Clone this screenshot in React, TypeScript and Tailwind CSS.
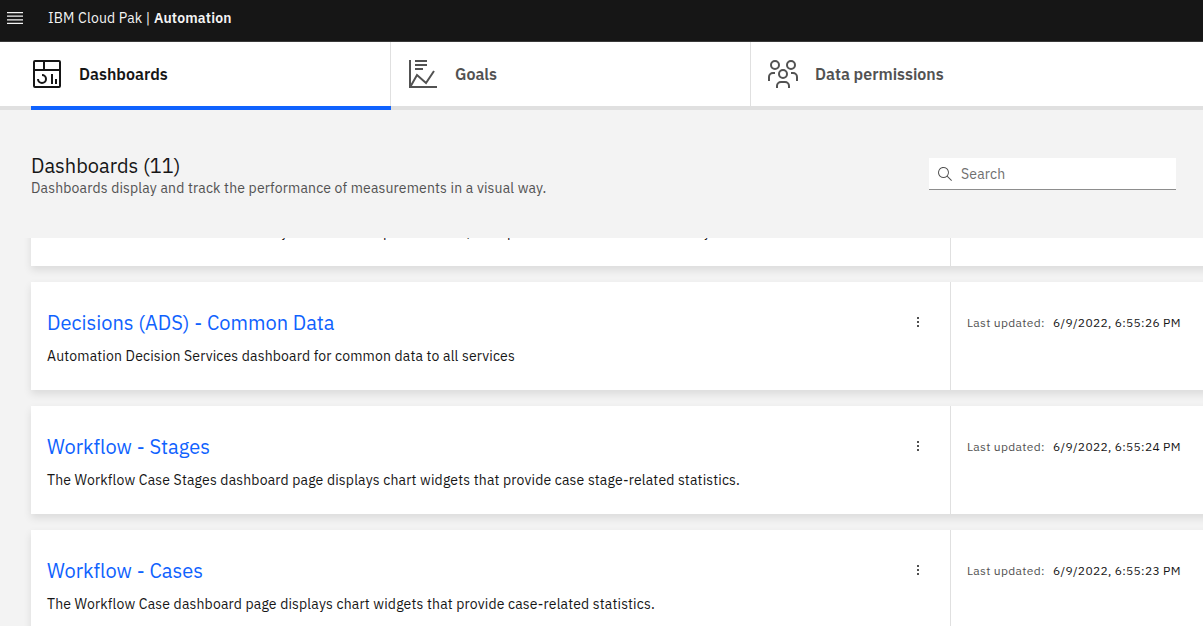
import type { ReactNode } from "react";

type Card = { title: string; text: string; date: string };

const cards: Card[] = [
  {
    title: "Content - Activity",
    text: "The Content dashboard for its activity of documents per solutions, but open tasks and their status a day",
    date: "6/9/2022, 6:55:28 PM",
  },
  {
    title: "Decisions (ADS) - Common Data",
    text: "Automation Decision Services dashboard for common data to all services",
    date: "6/9/2022, 6:55:26 PM",
  },
  {
    title: "Workflow - Stages",
    text: "The Workflow Case Stages dashboard page displays chart widgets that provide case stage-related statistics.",
    date: "6/9/2022, 6:55:24 PM",
  },
  {
    title: "Workflow - Cases",
    text: "The Workflow Case dashboard page displays chart widgets that provide case-related statistics.",
    date: "6/9/2022, 6:55:23 PM",
  },
];

function DashboardIcon() {
  return (
    <svg width="32" height="32" viewBox="0 0 32 32" fill="none" stroke="#161616" strokeWidth="2">
      <rect x="3" y="3" width="26" height="26" rx="1" />
      <path d="M3 12h26M13 3v9M21 16v10M25 21v5" />
      <path d="M11 17a4 4 0 1 1-4 4" />
    </svg>
  );
}

function GoalsIcon() {
  return (
    <svg width="32" height="32" viewBox="0 0 32 32" fill="none" stroke="#525252" strokeWidth="2">
      <path d="M3 2v27h27M8 3h12M8 7h12M8 11h8" />
      <path d="M3.500 28.500L10 17l9 8 8-12" />
    </svg>
  );
}

function PeopleIcon() {
  return (
    <svg width="32" height="32" viewBox="0 0 32 32" fill="none" stroke="#525252" strokeWidth="2">
      <circle cx="8" cy="7" r="4" />
      <circle cx="24" cy="7" r="4" />
      <circle cx="16" cy="16" r="4" />
      <path d="M2 23v-4a4 4 0 0 1 4-4h2M30 23v-4a4 4 0 0 0-4-4h-2M10 30v-2a4 4 0 0 1 4-4h4a4 4 0 0 1 4 4v2" />
    </svg>
  );
}

function Tab({ icon, children, className, innerClass }: { icon: ReactNode; children: ReactNode; className: string; innerClass: string }) {
  return (
    <div className={`flex h-[68px] w-[360px] shrink-0 items-center border-b-4 ${className}`}>
      <div className={`flex h-16 flex-1 items-center gap-4 border-[#e0e0e0] ${innerClass}`}>
        {icon}
        <span className="text-base font-semibold">{children}</span>
      </div>
    </div>
  );
}

function DashboardCard({ card }: { card: Card }) {
  return (
    <article className="flex h-[108px] w-[1200px] shrink-0 bg-white shadow-[0_4px_8px_rgba(0,0,0,0.1)]">
      <div className="flex w-[920px] shrink-0 justify-between border-r border-[#e0e0e0] pl-4">
        <div className="pt-[27px] whitespace-nowrap">
          <h2 className="text-[20px] leading-[28px] text-[#0f62fe]">{card.title}</h2>
          <p className="mt-[9px] text-[14px] leading-5 tracking-[0.16px] text-[#161616]">{card.text}</p>
        </div>
        <svg className="mt-8 mr-6" width="16" height="16" viewBox="0 0 16 16" fill="#161616">
          <circle cx="8" cy="4" r="1" />
          <circle cx="8" cy="8" r="1" />
          <circle cx="8" cy="12" r="1" />
        </svg>
      </div>
      <div className="flex gap-2 pt-8 pl-4 text-[12px] leading-[18px] tracking-[0.32px] whitespace-nowrap">
        <span className="w-[78px] text-[#525252]">Last updated:</span>
        <span className="text-[#161616]">{card.date}</span>
      </div>
    </article>
  );
}

export default function App() {
  return (
    <div className="flex h-[626px] w-[1203px] flex-col overflow-hidden bg-[#f3f3f3] font-['IBM_Plex_Sans',Roboto,sans-serif] text-[#161616]">
      <header className="flex h-[42px] shrink-0 items-center border-b border-[#393939] bg-[#161616] pb-[5px] text-sm tracking-[0.16px] text-[#f4f4f4]">
        <svg className="ml-[7px]" width="16" height="12" viewBox="0 0 16 12" fill="#f4f4f4">
          <path d="M0 0h16v1.2H0zM0 3.600h16v1.2H0zM0 7.200h16v1.2H0zM0 10.800h16V12H0z" />
        </svg>
        <span className="ml-[25px] whitespace-pre">IBM Cloud Pak | <b className="font-semibold">Automation</b></span>
      </header>
      <nav className="flex h-[68px] shrink-0 bg-white">
        <div className="w-[31px] shrink-0 border-b-4 border-[#e0e0e0]" />
        <Tab className="border-[#0f62fe] text-[#161616]" innerClass="border-r" icon={<DashboardIcon />}>Dashboards</Tab>
        <Tab className="border-[#e0e0e0] text-[#525252]" innerClass="border-r pl-4" icon={<GoalsIcon />}>Goals</Tab>
        <Tab className="border-[#e0e0e0] text-[#525252]" innerClass="pl-4" icon={<PeopleIcon />}>Data permissions</Tab>
        <div className="flex-1 border-b-4 border-[#e0e0e0]" />
      </nav>
      <section className="flex h-32 shrink-0 justify-between pr-[27px] pl-[31px]">
        <div className="pt-[42px]">
          <h1 className="text-[20px] leading-[28px]">Dashboards (11)</h1>
          <p className="text-[14px] leading-4 tracking-[0.16px] text-[#525252]">Dashboards display and track the performance of measurements in a visual way.</p>
        </div>
        <div className="mt-12 flex h-8 w-[247px] items-center gap-2 border-b border-[#8d8d8d] bg-white pl-2 text-sm tracking-[0.16px] text-[#6f6f6f]">
          <svg width="16" height="16" viewBox="0 0 16 16" fill="#525252">
            <path d="M15 14.3L10.7 10c1.9-2.3 1.6-5.8-.7-7.7S4.2.7 2.3 3 .7 8.800 3 10.700c2 1.700 5 1.700 7 0l4.300 4.300.700-.700zM2 6.500C2 4 4 2 6.500 2S11 4 11 6.500 9 11 6.500 11 2 9 2 6.500z" />
          </svg>
          <span>Search</span>
        </div>
      </section>
      <main className="flex min-h-0 flex-1 flex-col justify-start overflow-hidden pl-[31px]">
        <div className="-mt-20 flex flex-col gap-4">
          {cards.map((card) => (
            <DashboardCard key={card.title} card={card} />
          ))}
        </div>
      </main>
    </div>
  );
}
